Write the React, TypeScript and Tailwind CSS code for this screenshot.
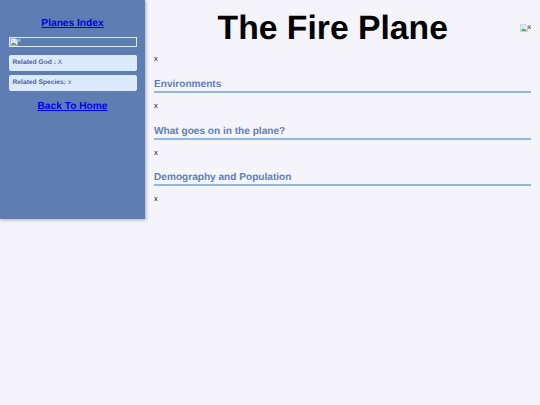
const font = { fontFamily: '"Liberation Sans", Arial, sans-serif' };

function BrokenImage({ size }: { size: number }) {
  return (
    <svg width={size} height={size} viewBox="0 0 16 16" className="shrink-0">
      <path d="M1 1h10l4 4v10H1z" fill="#e8eef8" stroke="#a9b4c4" strokeWidth="1" />
      <path d="M11 1v4h4" fill="#fff" stroke="#a9b4c4" strokeWidth="1" />
      <path d="M2 14l4-6 3 3 2-1 3 4z" fill="#5fa84f" />
      <circle cx="5" cy="5" r="1.6" fill="#b9cdea" />
    </svg>
  );
}

function Section({ title }: { title: string }) {
  return (
    <section>
      <h2 className="mt-[14px] border-b-2 border-[#8fbbe0] text-[10.1px] leading-[13px] font-bold text-[#6180b4]">
        {title}
      </h2>
      <p className="mt-[9px] text-[7.5px] leading-[8.5px] text-[#222]">x</p>
    </section>
  );
}

export default function App() {
  return (
    <div style={font} className="flex min-h-[405px] items-start bg-[#f4f4fa] [text-rendering:geometricPrecision]">
      <aside className="flex h-[219px] w-[145px] shrink-0 flex-col bg-[#5d7db3] px-[8.5px] pt-[16.5px] shadow-[1px_1px_3px_rgba(90,100,140,0.5)]">
        <a href="#" className="text-center text-[10.2px] leading-[14px] font-bold text-[#0000ee] underline">
          Planes Index
        </a>
        <div className="mt-[6.5px] flex h-[9.5px] items-center border border-[#dfe8f7] text-[6px] text-[#dfe8f7]">
          <BrokenImage size={8} />
          <span>x</span>
        </div>
        <div className="mt-[8px] flex h-[16px] items-center rounded-[2px] bg-[#dceafd] px-[4px] pt-[1px] text-[6.7px] text-[#4a6398]">
          <b>Related God :&nbsp;</b>X
        </div>
        <div className="mt-[4.5px] flex h-[16px] items-center rounded-[2px] bg-[#dceafd] px-[4px] pt-[1px] text-[6.7px] text-[#4a6398]">
          <b>Related Species:&nbsp;</b>x
        </div>
        <a href="#" className="mt-[7.5px] text-center text-[10.2px] leading-[15px] font-bold text-[#0000ee] underline">
          Back To Home
        </a>
      </aside>
      <main className="flex-1 pr-[9px] pl-[9px]">
        <div className="flex items-center">
          <h1 className="flex-1 pr-[8px] text-center text-[33.7px] leading-[56px] font-bold text-black">The Fire Plane</h1>
          <div className="flex items-center text-[7px] text-[#222]">
            <BrokenImage size={8} />
            <span>x</span>
          </div>
        </div>
        <p className="-mt-[2px] text-[7.5px] leading-[10px] text-[#222]">x</p>
        <Section title="Environments" />
        <Section title="What goes on in the plane?" />
        <Section title="Demography and Population" />
      </main>
    </div>
  );
}
